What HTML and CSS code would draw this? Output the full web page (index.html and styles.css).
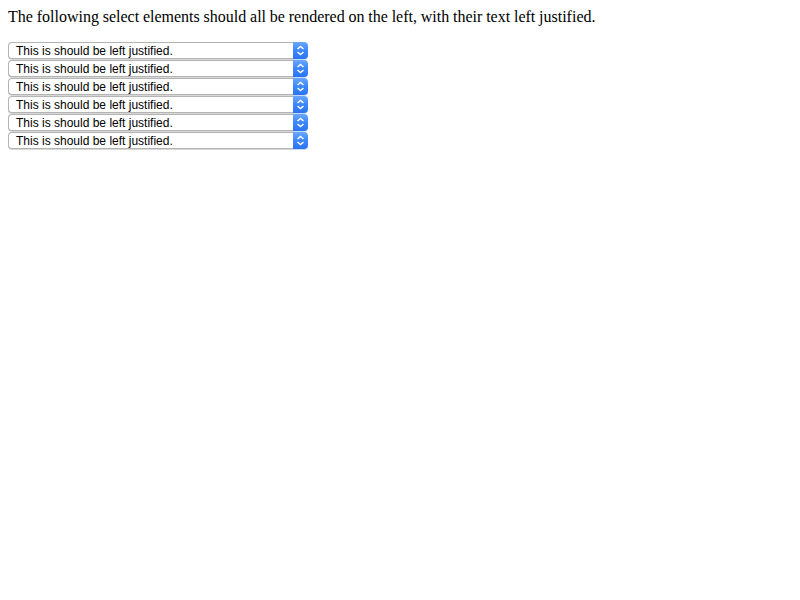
FILE: index.html
```html
<!DOCTYPE html>
<html lang="en">

<head>
  <meta charset="UTF-8">
  <title>Select alignment</title>
  <link rel="stylesheet" href="styles.css">
</head>

<body>
  The following select elements should all be rendered on the left, with their text left justified.
  <div class="selects">
    <div class="select"><span class="select-text">This is should be left justified.</span><span class="select-arrow"><svg width="9" height="11" viewBox="0 0 9 11"><path d="M1.5 4 L4.5 1.5 L7.5 4 M1.5 7 L4.5 9.5 L7.5 7" fill="none" stroke="#fff" stroke-width="1.5"/></svg></span></div>
    <div class="select"><span class="select-text">This is should be left justified.</span><span class="select-arrow"><svg width="9" height="11" viewBox="0 0 9 11"><path d="M1.5 4 L4.5 1.5 L7.5 4 M1.5 7 L4.5 9.5 L7.5 7" fill="none" stroke="#fff" stroke-width="1.5"/></svg></span></div>
    <div class="select"><span class="select-text">This is should be left justified.</span><span class="select-arrow"><svg width="9" height="11" viewBox="0 0 9 11"><path d="M1.5 4 L4.5 1.5 L7.5 4 M1.5 7 L4.5 9.5 L7.5 7" fill="none" stroke="#fff" stroke-width="1.5"/></svg></span></div>
    <div class="select"><span class="select-text">This is should be left justified.</span><span class="select-arrow"><svg width="9" height="11" viewBox="0 0 9 11"><path d="M1.5 4 L4.5 1.5 L7.5 4 M1.5 7 L4.5 9.5 L7.5 7" fill="none" stroke="#fff" stroke-width="1.5"/></svg></span></div>
    <div class="select"><span class="select-text">This is should be left justified.</span><span class="select-arrow"><svg width="9" height="11" viewBox="0 0 9 11"><path d="M1.5 4 L4.5 1.5 L7.5 4 M1.5 7 L4.5 9.5 L7.5 7" fill="none" stroke="#fff" stroke-width="1.5"/></svg></span></div>
    <div class="select"><span class="select-text">This is should be left justified.</span><span class="select-arrow"><svg width="9" height="11" viewBox="0 0 9 11"><path d="M1.5 4 L4.5 1.5 L7.5 4 M1.5 7 L4.5 9.5 L7.5 7" fill="none" stroke="#fff" stroke-width="1.5"/></svg></span></div>
  </div>
</body>

</html>
```
FILE: styles.css
```css
body {
  margin: 8px;
  font-family: 'Liberation Serif', 'Times New Roman', serif;
  font-size: 16px;
  line-height: 18px;
  word-spacing: -0.2px;
  color: #000;
  background: #fff;
}

.selects {
  margin-top: 16px;
  display: flex;
  flex-direction: column;
  align-items: flex-start;
  word-spacing: normal;
}

.select {
  display: flex;
  width: 300px;
  height: 18px;
  box-sizing: border-box;
}

.select-text {
  flex: 1;
  height: 17px;
  box-sizing: border-box;
  border: 1px solid #b4b4b4;
  border-right: none;
  border-radius: 4px 0 0 4px;
  box-shadow: 0 1px 0 #d8d8d8;
  padding-left: 7px;
  font-family: 'Liberation Sans', Arial, sans-serif;
  font-size: 12px;
  line-height: 16px;
  color: #000;
  background: #fff;
}

.select-arrow {
  width: 15px;
  height: 17px;
  display: flex;
  align-items: center;
  justify-content: center;
  border-radius: 0 4px 4px 0;
  background: linear-gradient(#6aa8ff, #3d86fa 50%, #2a74f3);
  box-shadow: 0 1px 0 #c8d8f0;
}
```
